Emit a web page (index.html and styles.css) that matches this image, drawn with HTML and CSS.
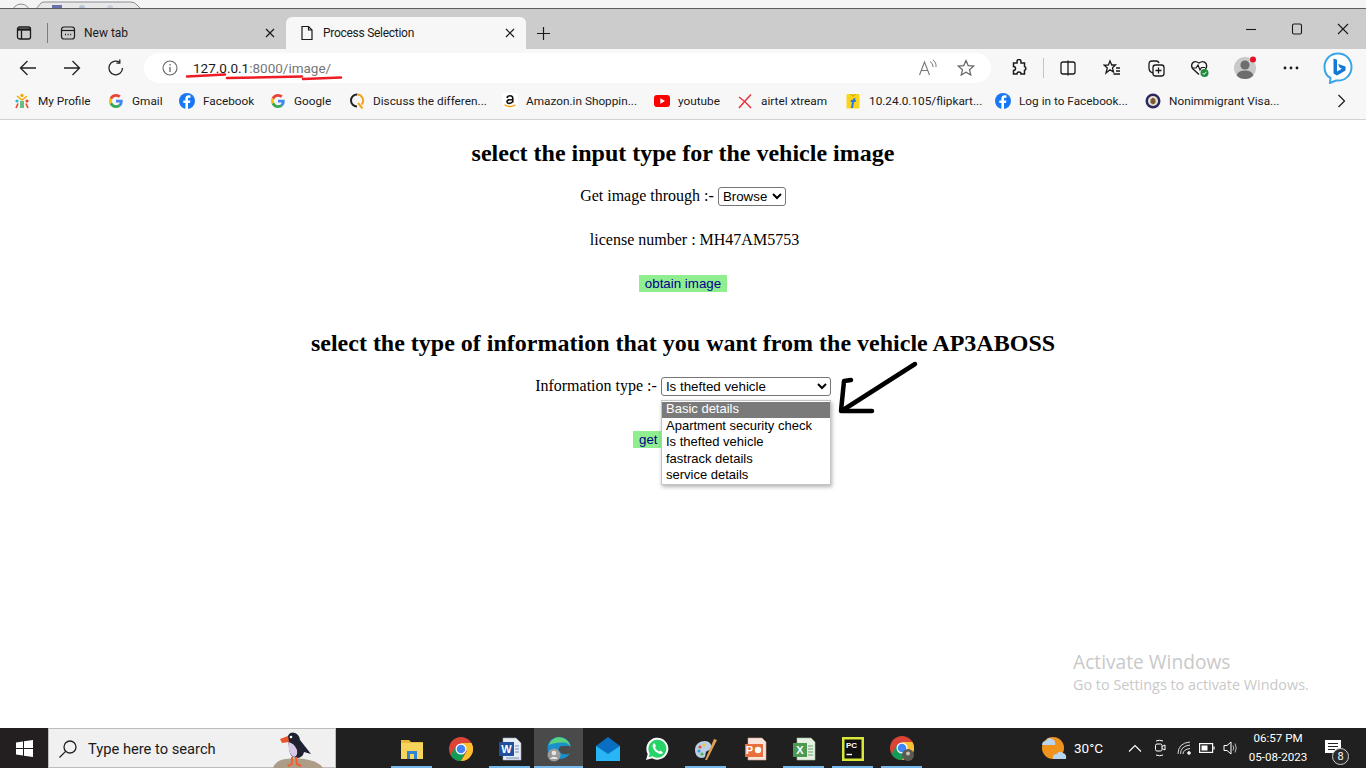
FILE: index.html
```html
<!DOCTYPE html>
<html lang="en">
<head>
<meta charset="utf-8">
<title>Process Selection</title>
<link rel="stylesheet" href="styles.css">
</head>
<body>
<div class="screen">
  <div class="desktop-strip">
    <svg class="strip-art" width="150" height="9" viewBox="0 0 150 9"><circle cx="21" cy="13" r="9" fill="#eee" stroke="#8a8f96"/><path d="M36 9 L41 3 Q42 2 45 2 H131 Q135 2 137 5 L141 9" fill="#e8e8e8" stroke="#8a8f96"/><rect x="52" y="5" width="10" height="4" fill="#6a6fb0"/><circle cx="82" cy="8" r="3" fill="#b9c3d6"/><circle cx="110" cy="8" r="3" fill="#c9ced8"/></svg>
  </div>
  <header class="browser">
    <div class="tabstrip">
      <span class="strip-icon"><svg width="16" height="16" viewBox="0 0 16 16" fill="none" stroke="#1a1a1a" stroke-width="1.3"><rect x="1.5" y="2" width="13" height="12" rx="2"/><path d="M1.5 4.5H14.5" stroke-width="2.4"/><path d="M5.5 5.5V14" /></svg></span>
      <span class="strip-sep"></span>
      <div class="tab">
        <svg width="16" height="16" viewBox="0 0 16 16" fill="none" stroke="#1a1a1a" stroke-width="1.2"><rect x="1.5" y="2" width="13" height="12" rx="2.5"/><path d="M1.5 5.5H14.5"/><path d="M5 9.5h1M7.6 9.5h1M10.2 9.5h1" stroke-width="1.5"/></svg>
        <span class="tab-title">New tab</span>
        <svg class="tab-close" width="10" height="10" viewBox="0 0 10 10" stroke="#1a1a1a" stroke-width="1.2"><path d="M1 1L9 9M9 1L1 9"/></svg>
      </div>
      <div class="tab tab-active">
        <svg width="16" height="16" viewBox="0 0 16 16" fill="none" stroke="#1a1a1a" stroke-width="1.2"><path d="M3 1.5H9.5L13 5V14.5H3Z"/><path d="M9.5 1.5V5H13"/></svg>
        <span class="tab-title">Process Selection</span>
        <svg class="tab-close" width="10" height="10" viewBox="0 0 10 10" stroke="#1a1a1a" stroke-width="1.2"><path d="M1 1L9 9M9 1L1 9"/></svg>
      </div>
      <span class="new-tab"><svg width="15" height="15" viewBox="0 0 15 15" stroke="#1a1a1a" stroke-width="1.2"><path d="M7.5 1V14M1 7.5H14"/></svg></span>
      <div class="win-controls">
        <svg width="12" height="12" viewBox="0 0 12 12" stroke="#1a1a1a" stroke-width="1.1"><path d="M1 6.5H11"/></svg>
        <svg width="12" height="12" viewBox="0 0 12 12" fill="none" stroke="#1a1a1a" stroke-width="1.1"><rect x="1.5" y="1" width="9" height="10" rx="1.5"/></svg>
        <svg width="12" height="12" viewBox="0 0 12 12" stroke="#1a1a1a" stroke-width="1.1"><path d="M1 1L11 11M11 1L1 11"/></svg>
      </div>
    </div>
    <div class="toolbar">
      <div class="nav-buttons">
        <svg width="18" height="18" viewBox="0 0 18 18" fill="none" stroke="#222" stroke-width="1.3"><path d="M17 9H1.500M8.500 2L1.500 9L8.500 16"/></svg>
        <svg width="18" height="18" viewBox="0 0 18 18" fill="none" stroke="#222" stroke-width="1.3"><path d="M1 9H16.500M9.500 2L16.500 9L9.500 16"/></svg>
        <svg width="18" height="18" viewBox="0 0 18 18" fill="none" stroke="#222" stroke-width="1.3"><path d="M15.500 9A6.800 6.800 0 1 1 12.600 3.400"/><path d="M12.800 0.600V4.200H9.400" /></svg>
      </div>
      <div class="omnibox">
        <svg class="info" width="16" height="16" viewBox="0 0 16 16" fill="none" stroke="#666" stroke-width="1.1"><circle cx="8" cy="8" r="7"/><path d="M8 7V12M8 4V5.400" stroke-width="1.300"/></svg>
        <span class="url"><span class="url-host">127.0.0.1</span>:8000/image/</span>
        <svg class="read-aloud" width="20" height="18" viewBox="0 0 20 18" fill="none" stroke="#777" stroke-width="1.100"><path d="M1.500 16L6.500 3L11.500 16M3.400 11.500H9.600"/><path d="M12 2.500Q15 4 15 8M14.800 1Q18.500 3 18 8" stroke-width="1"/></svg>
        <svg class="star" width="18" height="18" viewBox="0 0 18 18" fill="none" stroke="#666" stroke-width="1.200"><path d="M9 1.500L11.200 6.600L16.700 7.100L12.500 10.700L13.800 16.100L9 13.200L4.200 16.100L5.500 10.700L1.300 7.100L6.800 6.600Z"/></svg>
      </div>
      <div class="tool-icons">
        <span class="tool ext"><svg width="18" height="18" viewBox="0 0 18 18" fill="none" stroke="#1a1a1a" stroke-width="1.500"><path d="M7 2.500a2 2 0 0 1 4 0V4h3.500v3.500a2 2 0 0 1 0 3.800V15H11a2 2 0 0 0-4 0H3.500v-3.500a2 2 0 0 0 0-4V4H7Z"/></svg></span>
        <span class="tool-sep"></span>
        <span class="tool split"><svg width="18" height="18" viewBox="0 0 18 18" fill="none" stroke="#1a1a1a" stroke-width="1.300"><path d="M9 3H4Q2 3 2 5V13Q2 15 4 15H9M9 3H14Q16 3 16 5V13Q16 15 14 15H9M9 1.500V16.500"/></svg></span>
        <span class="tool fav"><svg width="18" height="18" viewBox="0 0 18 18" fill="none" stroke="#1a1a1a" stroke-width="1.300"><path d="M7 2L8.700 6H12.500L9.500 8.800L10.500 13L7 10.800L3 14L4.300 9L1.200 6.200H5.300Z"/><path d="M13 9H17M13 12H17M10.500 15H17"/></svg></span>
        <span class="tool coll"><svg width="18" height="18" viewBox="0 0 18 18" fill="none" stroke="#1a1a1a" stroke-width="1.300"><path d="M6 14Q2 13 2 9V5Q2 2 5 2H9Q11.500 2 12 4"/><rect x="6" y="6" width="11" height="11" rx="2.500"/><path d="M11.500 8.500V14.500M8.500 11.500H14.500"/></svg></span>
        <span class="tool health"><svg width="20" height="20" viewBox="0 0 20 20" fill="none"><path d="M9 16.500L3 11Q0.800 8.500 2.200 5.500Q4.500 2 9 5Q13.500 2 16 5.500Q17.500 8.500 15.500 11" stroke="#1a1a1a" stroke-width="1.400"/><path d="M2 10H6L8 7L10 12L11.500 9.500H15" stroke="#1a1a1a" stroke-width="1.200"/><circle cx="14.500" cy="15" r="4" fill="#1e8a3c"/><path d="M12.600 15L14 16.500L16.400 13.800" stroke="#fff" stroke-width="1"/></svg></span>
        <span class="tool avatar"><svg width="24" height="24" viewBox="0 0 24 24"><circle cx="12" cy="12" r="11" fill="#c9c9c9"/><circle cx="12" cy="9" r="4.600" fill="#6d6d6d"/><path d="M3.600 19.500Q5 14.500 12 14.500T20.400 19.500Q17 23 12 23T3.600 19.500Z" fill="#6d6d6d"/><circle cx="20" cy="3.500" r="3" fill="#e81123"/></svg></span>
        <span class="tool dots"><svg width="16" height="4" viewBox="0 0 16 4" fill="#1a1a1a"><circle cx="2" cy="2" r="1.400"/><circle cx="8" cy="2" r="1.400"/><circle cx="14" cy="2" r="1.400"/></svg></span>
        <span class="tool bing"><svg width="30" height="32" viewBox="0 0 30 32"><path d="M15 1.500C7 1.500 1.500 7.500 1.500 15C1.500 20 3.500 24 7.500 26L7 31L13 28.500C22 29.500 28.500 23 28.500 15C28.500 7.500 23 1.500 15 1.500Z" fill="#fff" stroke="#3aa5e8" stroke-width="2"/><path d="M10.500 6.500L14 7.800V19.500L19 16.700L16.500 15.500L15.200 12L22.500 14.600V18.600L14 23.600L10.500 21.500Z" fill="#1478d4"/></svg></span>
      </div>
    </div>
    <nav class="bookmarks">
      <a class="bm"><svg width="16" height="16" viewBox="0 0 16 16"><circle cx="8" cy="2.500" r="1.700" fill="#f2a900"/><path d="M3 3L8 7L13 3" stroke="#f2a900" stroke-width="1.400" fill="none"/><circle cx="3" cy="8" r="1.600" fill="#29b6d8"/><circle cx="13" cy="8" r="1.600" fill="#e8452c"/><path d="M2 15L4 10.500M14 15L12 10.500" stroke="#e8452c" stroke-width="1.600"/><path d="M7 8V15M9 8V15" stroke="#2fa84f" stroke-width="1.400"/></svg><span>My Profile</span></a>
      <a class="bm"><svg class="g" width="14" height="14" viewBox="0 0 48 48"><path fill="#EA4335" d="M24 9.500c3.500 0 6.700 1.200 9.200 3.600l6.900-6.900C35.900 2.400 30.400 0 24 0 14.600 0 6.500 5.400 2.600 13.200l8 6.200C12.500 13.700 17.800 9.500 24 9.500z"/><path fill="#4285F4" d="M47 24.500c0-1.600-.1-3.100-.4-4.500H24v9h12.900c-.6 3-2.200 5.500-4.700 7.200l7.700 6C44.400 37.900 47 31.800 47 24.500z"/><path fill="#FBBC05" d="M10.500 28.600c-.5-1.400-.8-3-.8-4.600s.3-3.200.8-4.600l-8-6.200C.9 16.500 0 20.100 0 24s.9 7.500 2.600 10.800l7.900-6.200z"/><path fill="#34A853" d="M24 48c6.500 0 11.900-2.100 15.900-5.800l-7.700-6c-2.200 1.400-4.900 2.300-8.200 2.300-6.200 0-11.500-4.200-13.400-9.900l-8 6.200C6.500 42.600 14.600 48 24 48z"/></svg><span>Gmail</span></a>
      <a class="bm"><svg width="16" height="16" viewBox="0 0 16 16"><circle cx="8" cy="8" r="8" fill="#1877f2"/><path d="M9 16V10h2l.4-2.500H9V6c0-.8.3-1.300 1.400-1.300h1.100V2.500C11 2.400 10.300 2.300 9.700 2.300 7.700 2.300 6.400 3.500 6.400 5.600v1.900H4.300V10h2.100v6Z" fill="#fff"/></svg><span>Facebook</span></a>
      <a class="bm"><svg class="g" width="14" height="14" viewBox="0 0 48 48"><path fill="#EA4335" d="M24 9.500c3.500 0 6.700 1.200 9.200 3.600l6.900-6.900C35.900 2.400 30.400 0 24 0 14.600 0 6.500 5.400 2.600 13.200l8 6.200C12.500 13.700 17.800 9.500 24 9.500z"/><path fill="#4285F4" d="M47 24.500c0-1.600-.1-3.100-.4-4.500H24v9h12.900c-.6 3-2.200 5.500-4.700 7.200l7.700 6C44.400 37.900 47 31.800 47 24.500z"/><path fill="#FBBC05" d="M10.500 28.600c-.5-1.400-.8-3-.8-4.600s.3-3.200.8-4.600l-8-6.200C.9 16.500 0 20.100 0 24s.9 7.500 2.600 10.800l7.900-6.200z"/><path fill="#34A853" d="M24 48c6.500 0 11.900-2.100 15.900-5.800l-7.700-6c-2.200 1.400-4.900 2.300-8.200 2.300-6.200 0-11.500-4.200-13.400-9.900l-8 6.200C6.500 42.600 14.600 48 24 48z"/></svg><span>Google</span></a>
      <a class="bm"><svg width="16" height="16" viewBox="0 0 16 16" fill="none"><path d="M8 1.500A6 6 0 1 0 8 13.500" stroke="#222" stroke-width="2"/><path d="M8 1.500A6 6 0 0 1 12.500 11.500" stroke="#f2a21f" stroke-width="2"/><path d="M9 10L13.500 15.500" stroke="#f2a21f" stroke-width="2"/></svg><span>Discuss the differen...</span></a>
      <a class="bm"><svg width="16" height="16" viewBox="0 0 16 16" fill="none"><rect width="16" height="16" rx="2" fill="#fff"/><path d="M5 5Q5.500 2.800 8 2.800T10.800 5V9.500M10.800 6.500Q5 6.500 5 8.600T8 10.300Q10 10 10.800 8.200" stroke="#111" stroke-width="1.600"/><path d="M2.500 11.800Q8 15.500 13.500 11.800" stroke="#f90" stroke-width="1.300"/></svg><span>Amazon.in Shoppin...</span></a>
      <a class="bm"><svg width="16" height="12" viewBox="0 0 16 12"><rect width="16" height="12" rx="3" fill="#f00"/><path d="M6.300 3.300V8.700L11 6Z" fill="#fff"/></svg><span>youtube</span></a>
      <a class="bm"><svg width="16" height="16" viewBox="0 0 16 16" fill="none" stroke="#e8303a" stroke-width="1.500"><path d="M2 15Q7 9 14 1.500"/><path d="M2 4Q8 8 14 15"/></svg><span>airtel xtream</span></a>
      <a class="bm"><svg width="16" height="16" viewBox="0 0 16 16"><rect x="1.500" y="1" width="13" height="14.500" rx="1" fill="#f9d51c"/><path d="M5.500 1Q8 5 10.500 1" fill="none" stroke="#c9a400"/><path d="M6 15L7 9H5.500L6 7H7.500Q8 4.800 10.500 5L10.200 6.800Q9.400 6.700 9.300 7H11L10.600 9H9L8 15Z" fill="#2874f0"/></svg><span>10.24.0.105/flipkart...</span></a>
      <a class="bm"><svg width="16" height="16" viewBox="0 0 16 16"><circle cx="8" cy="8" r="8" fill="#1877f2"/><path d="M9 16V10h2l.4-2.500H9V6c0-.8.3-1.300 1.400-1.300h1.100V2.500C11 2.400 10.300 2.300 9.700 2.300 7.700 2.300 6.400 3.500 6.400 5.600v1.900H4.300V10h2.100v6Z" fill="#fff"/></svg><span>Log in to Facebook...</span></a>
      <a class="bm"><svg width="16" height="16" viewBox="0 0 16 16"><circle cx="8" cy="8" r="7.500" fill="#2b2a5e"/><circle cx="8" cy="8" r="5" fill="#e9e4d4"/><path d="M8 4.500L10.500 6.500V10L8 11.500L5.500 10V6.500Z" fill="#7a5a34"/></svg><span>Nonimmigrant Visa...</span></a>
      <svg class="bm-more" width="9" height="14" viewBox="0 0 9 14" fill="none" stroke="#222" stroke-width="1.300"><path d="M1.500 1L7.500 7L1.500 13"/></svg>
    </nav>
  </header>

  <main class="page">
    <h2 class="heading">select the input type for the vehicle image</h2>
    <div class="row row-source">
      <label>Get image through :-</label>
      <select class="picker picker-source"><option>Browse</option><option>Camera</option></select>
    </div>
    <div class="row row-license">license number : MH47AM5753</div>
    <button class="action action-obtain" type="button">obtain image</button>
    <h2 class="heading heading-info">select the type of information that you want from the vehicle AP3ABOSS</h2>
    <div class="row row-source">
      <label>Information type :-</label>
      <select class="picker picker-info">
        <option hidden>Basic details</option>
        <option hidden>Apartment security check</option>
        <option selected>Is thefted vehicle</option>
        <option>fastrack details</option>
        <option>service details</option>
      </select>
    </div>
    <button class="action action-get" type="button">get</button>

    <ul class="dropdown">
      <li class="dropdown-active">Basic details</li>
      <li>Apartment security check</li>
      <li>Is thefted vehicle</li>
      <li>fastrack details</li>
      <li>service details</li>
    </ul>
    <div class="watermark">
      <div class="wm-title">Activate Windows</div>
      <div class="wm-sub">Go to Settings to activate Windows.</div>
    </div>
  </main>

  <footer class="taskbar">
    <div class="start"><svg width="17" height="17" viewBox="0 0 17 17" fill="#fff"><path d="M0 2.400L7 1.400V8H0ZM8 1.200L17 0V8H8ZM0 9H7V15.600L0 14.600ZM8 9H17V17L8 15.800Z"/></svg></div>
    <div class="search">
      <svg width="20" height="20" viewBox="0 0 20 20" fill="none" stroke="#222" stroke-width="1.300"><circle cx="12" cy="8" r="6"/><path d="M7.600 12.400L1.500 18.500"/></svg>
      <span class="search-text">Type here to search</span>
      <svg class="puffin" width="50" height="36" viewBox="0 0 50 36"><path d="M0 36Q3 28 13 27Q26 25 36 28Q46 30 50 36Z" fill="#ad9c88"/><path d="M15 7Q14 1 20 0.500Q26 1 27 8L38 22L31 20Q30 26 23 26Q16 25 16 15Z" fill="#1f2230"/><path d="M15.500 10Q21 11 24 18Q25 24 21 25Q15 23 15.500 10Z" fill="#d9c9e8"/><path d="M15 4L7 7L9 11L16 10Z" fill="#e8562c"/><circle cx="18" cy="5" r="1.300" fill="#fff"/><path d="M19 25L19 32L15 34M23 25L24 32L28 34" stroke="#f0602c" stroke-width="2" fill="none"/></svg>
    </div>
    <div class="task-icons">
      <span class="task task-open"><svg width="22" height="22" viewBox="0 0 22 22"><path d="M0 2H8L10 4H22V7H0Z" fill="#e8b93b"/><rect y="5" width="22" height="16" fill="#f7d55c"/><path d="M6 21V13H16V21H13V16H9V21Z" fill="#2f86d6"/></svg></span>
      <span class="task"><svg width="24" height="24" viewBox="0 0 24 24"><circle cx="12" cy="12" r="12" fill="#db4437"/><path d="M12 12L1.600 18A12 12 0 0 0 12 24L18 12Z" fill="#0f9d58"/><path d="M12 24A12 12 0 0 0 22.400 6H12L18 14Z" fill="#fbc02d"/><path d="M1.600 18L7 9L12 12Z" fill="#0f9d58"/><circle cx="12" cy="12" r="5.500" fill="#fff"/><circle cx="12" cy="12" r="4.300" fill="#4285f4"/></svg></span>
      <span class="task task-open"><svg width="24" height="24" viewBox="0 0 24 24"><path d="M5 1H18L23 6V23H5Z" fill="#e8edf4" stroke="#9aa8c0" stroke-width=".6"/><rect x="1" y="5" width="15" height="14" fill="#1f4f9e"/><text x="8.500" y="16" class="ic-letter">W</text><path d="M17 9H21M17 12H21M17 15H21M8 21H21" stroke="#6f8bb8"/></svg></span>
      <span class="task task-current"><svg width="24" height="28" viewBox="0 0 24 28"><path d="M12 2C5 2 0.500 7 0.500 13C0.500 20 6 24 12 24C17 24 21 22 23 18C20 20 14 20 12 16C11 13 13 11 16 11H23.500C23 6 18.500 2 12 2Z" fill="#1a8fc9"/><path d="M2 10C4 3 11 1 16 3C21 5 23.500 9 23.500 13C23 9 19 7 15 7.500C10 8 6 8 2 10Z" fill="#5bd27c"/><circle cx="7" cy="20" r="6.500" fill="#9a9a9a"/><circle cx="7" cy="18" r="2.300" fill="#e6e6e6"/><path d="M2.800 24Q7 19.500 11.200 24Z" fill="#e6e6e6"/></svg></span>
      <span class="task"><svg width="24" height="24" viewBox="0 0 24 24"><path d="M0 9L12 0L24 9V24H0Z" fill="#0a6fc2"/><path d="M0 9L12 17L24 9V24H0Z" fill="#29b6f6"/></svg></span>
      <span class="task"><svg width="24" height="24" viewBox="0 0 24 24"><path d="M1 23L2.700 17A11 11 0 1 1 7 21.300Z" fill="#fff"/><path d="M3.600 20.300L4.800 16.500A9 9 0 1 1 7.600 19.300Z" fill="#25d366"/><path d="M8.500 6.500Q7 8 7.800 10.500Q10 15.500 15 17Q17 17.500 18 15.500L15.500 13.500L14 14.500Q11 13 10 10.500L11 9L9.800 6.500Z" fill="#fff"/></svg></span>
      <span class="task task-open"><svg width="24" height="26" viewBox="0 0 24 26"><path d="M1 14C1 8 6 5 11 5C15 5 18 8 17 12C16 15 13 14 12 16C11 19 12 22 8 22C4 22 1 19 1 14Z" fill="#b9cfe6"/><circle cx="6" cy="11" r="1.600" fill="#e8503a"/><circle cx="10" cy="9" r="1.600" fill="#f0c33c"/><circle cx="5" cy="15" r="1.600" fill="#3f9be0"/><circle cx="8" cy="18" r="1.600" fill="#52b152"/><path d="M11 24L20 3L23 4L13 24Z" fill="#e0a052"/></svg></span>
      <span class="task"><svg width="24" height="24" viewBox="0 0 24 24"><path d="M5 1H19L23 5V23H5Z" fill="#f7e4dc" stroke="#d9a38e" stroke-width=".6"/><rect x="2" y="7" width="18" height="13" fill="#e8703c"/><text x="6.500" y="17" class="ic-letter">P</text><circle cx="15" cy="13" r="3.200" fill="#fff"/></svg></span>
      <span class="task task-open"><svg width="24" height="24" viewBox="0 0 24 24"><path d="M5 1H19L23 5V23H5Z" fill="#e6f1e4" stroke="#9fbf9a" stroke-width=".6"/><rect x="1" y="6" width="14" height="14" fill="#4c9a52"/><text x="8" y="17" class="ic-letter">X</text><path d="M16 9H21M16 12H21M16 15H21M16 18H21" stroke="#6a9f6a"/></svg></span>
      <span class="task task-open"><svg width="22" height="24" viewBox="0 0 22 24"><rect width="22" height="24" fill="#d8e83a"/><rect x="2.500" y="2.500" width="17" height="19" fill="#111"/><text x="4" y="11" class="ic-pc">PC</text><path d="M4.500 17.500H10" stroke="#fff" stroke-width="1.400"/></svg></span>
      <span class="task task-open"><svg width="24" height="26" viewBox="0 0 24 26"><circle cx="12" cy="12" r="12" fill="#db4437"/><path d="M12 12L1.600 18A12 12 0 0 0 12 24L18 12Z" fill="#0f9d58"/><path d="M12 24A12 12 0 0 0 22.400 6H12L18 14Z" fill="#fbc02d"/><path d="M1.600 18L7 9L12 12Z" fill="#0f9d58"/><circle cx="12" cy="12" r="5.500" fill="#fff"/><circle cx="12" cy="12" r="4.300" fill="#4285f4"/><circle cx="18" cy="19" r="6" fill="#5a5a52"/><circle cx="18" cy="17.500" r="2" fill="#c7c2b4"/></svg></span>
    </div>
    <div class="tray">
      <svg class="weather" width="26" height="28" viewBox="0 0 26 28"><path d="M12 3A11 11 0 1 1 12 25A11 11 0 0 1 12 3Z" fill="#f0931c"/><path d="M1 11Q1 7 5 7Q7 2 11 5Q15 6 14 11Z" fill="#b8d4ee"/><path d="M12 25Q11 20 16 20Q18 16 22 19Q26 20 25 25Z" fill="#b8d4ee"/></svg>
      <span class="temp">30°C</span>
      <svg class="tray-chev" width="14" height="8" viewBox="0 0 14 8" fill="none" stroke="#fff" stroke-width="1.100"><path d="M1 7.500L7 1.500L13 7.500"/></svg>
      <svg class="tray-cam" width="12" height="20" viewBox="0 0 12 20" fill="none" stroke="#fff" stroke-width="1"><rect x="1.500" y="6" width="6.500" height="7" rx="1.500"/><path d="M8 8.500L11 7V12L8 10.500M2 3Q5.500 1.500 9 3M2 17Q5.500 18.500 9 17"/></svg>
      <svg class="tray-wifi" width="14" height="14" viewBox="0 0 14 14" fill="none" stroke="#d8d8d8" stroke-width="1"><path d="M1 13Q1 2 13 1M3.500 13Q3.500 5 13 4M6 13Q6 8.500 13 7.500"/><circle cx="12" cy="12" r="1.400" fill="#fff"/></svg>
      <svg class="tray-bat" width="16" height="10" viewBox="0 0 16 10" fill="none" stroke="#fff" stroke-width="1.200"><rect x=".6" y=".6" width="13" height="8.800"/><rect x="2.500" y="2.500" width="6" height="5" fill="#fff" stroke="none"/><path d="M15 3.500V6.500"/></svg>
      <svg class="tray-vol" width="16" height="16" viewBox="0 0 16 16" fill="none" stroke="#fff" stroke-width="1"><path d="M1 5.500H4L8 2V14L4 10.500H1Z"/><path d="M10 5.500Q11.500 8 10 10.500M12 3.500Q14.500 8 12 12.500" stroke="#bbb"/></svg>
      <div class="clock"><span>06:57 PM</span><span>05-08-2023</span></div>
      <div class="notify">
        <svg width="16" height="13" viewBox="0 0 16 13"><path d="M0 0H16V13H0Z" fill="#fff"/><path d="M3 3.500H13M3 6.500H13M3 9.500H10" stroke="#222"/></svg>
        <span class="notify-badge">8</span>
      </div>
    </div>
  </footer>

  <svg class="annotations" width="1366" height="768" viewBox="0 0 1366 768" fill="none">
    <path d="M187 76.500L225 74.500" stroke="#ed1c24" stroke-width="2.500" stroke-linecap="round"/>
    <path d="M227 78L302 76.500" stroke="#ed1c24" stroke-width="2.500" stroke-linecap="round"/>
    <path d="M303 79L341 77.500" stroke="#ed1c24" stroke-width="2.500" stroke-linecap="round"/>
    <path d="M915 364L843 410" stroke="#000" stroke-width="4.500" stroke-linecap="round"/>
    <path d="M851 380L844 381L841 411H872" stroke="#000" stroke-width="4.500" stroke-linecap="round" stroke-linejoin="round"/>
  </svg>
</div>
</body>
</html>
```

FILE: styles.css
```css
* { box-sizing: border-box; }
html, body { margin: 0; padding: 0; }
body { background: #fff; overflow: hidden; }

.screen {
  position: relative;
  width: 1366px;
  height: 768px;
  display: flex;
  flex-direction: column;
  overflow: hidden;
  font-family: "Roboto", "Liberation Sans", sans-serif;
}

.desktop-strip {
  height: 9px;
  flex: none;
  background: #f4f4f4;
  border-bottom: 1px solid #5c5c5c;
  overflow: hidden;
}
.strip-art { display: block; }

.browser { flex: none; }

.tabstrip {
  height: 40px;
  background: #cccccc;
  display: flex;
  align-items: flex-end;
  color: #1a1a1a;
  font-size: 12px;
}
.strip-icon {
  width: 47px;
  height: 32px;
  display: flex;
  align-items: center;
  padding-left: 16px;
}
.strip-sep { width: 1px; height: 20px; background: #7d7d7d; margin-bottom: 6px; }
.tab {
  width: 238px;
  height: 32px;
  display: flex;
  align-items: center;
  padding-left: 12px;
  gap: 8px;
}
.tab-active {
  width: 240px;
  background: #f7f7f7;
  border-radius: 6px 6px 0 0;
  padding-left: 13px;
  gap: 8px;
}
.tab-active .tab-title { letter-spacing: -0.28px; }
.tab-title { flex: 1; white-space: nowrap; }
.tab-close { margin-right: 11px; }
.new-tab { width: 34px; height: 32px; display: flex; align-items: center; justify-content: center; }
.win-controls {
  margin-left: auto;
  height: 40px;
  width: 138px;
  display: flex;
  align-items: center;
  justify-content: space-between;
  padding: 0 17px;
}

.toolbar {
  height: 38px;
  background: #f7f7f7;
  display: flex;
  align-items: center;
}
.nav-buttons {
  width: 144px;
  display: flex;
  gap: 26px;
  padding-left: 19px;
}
.omnibox {
  width: 847px;
  height: 30px;
  background: #fff;
  border-radius: 15px;
  display: flex;
  align-items: center;
  padding-left: 18px;
}
.url {
  margin-left: 15px;
  font-size: 13.5px;
  color: #767676;
  white-space: nowrap;
  flex: 1;
}
.url-host { color: #1a1a1a; }
.read-aloud { margin-right: 19px; }
.star { margin-right: 16px; }
.tool-icons { flex: 1; display: flex; align-items: center; height: 38px; }
.tool { display: flex; align-items: center; justify-content: center; flex: none; }
.ext { width: 18px; margin-left: 19px; }
.tool-sep { width: 1px; height: 20px; background: #c4c4c4; margin-left: 15px; }
.split { width: 18px; margin-left: 15px; }
.fav { width: 18px; margin-left: 26px; }
.coll { width: 18px; margin-left: 26px; }
.health { width: 20px; margin-left: 25px; }
.avatar { width: 24px; margin-left: 23px; }
.dots { width: 16px; margin-left: 26px; }
.bing { width: 30px; margin-left: 24px; }

.bookmarks {
  height: 33px;
  background: #f7f7f7;
  border-bottom: 1px solid #d2d2d2;
  display: grid;
  grid-template-columns: 94px 71px 91px 79px 153px 152px 83px 108px 150px 150px 192px auto;
  align-items: center;
  padding: 0 0 4px 14px;
  font-size: 11.8px;
  color: #1a1a1a;
}
.bm {
  display: flex;
  align-items: center;
  gap: 8px;
  white-space: nowrap;
  overflow: hidden;
}
.bm .g { margin-left: 1px; margin-right: 1px; }

.page {
  flex: 1;
  min-height: 0;
  position: relative;
  display: flex;
  flex-direction: column;
  align-items: center;
  font-family: "Liberation Serif", serif;
  font-size: 16px;
  color: #000;
  background: #fff;
}
.heading {
  margin: 20px 0 0;
  font-size: 24px;
  font-weight: 700;
  line-height: 27px;
  white-space: nowrap;
}
.heading-info { margin-top: 38px; }
.row {
  display: flex;
  align-items: center;
  gap: 4px;
  height: 20px;
  white-space: pre;
}
.row-source { margin-top: 19px; }
.row-license { margin-top: 24px; margin-left: 23px; }
.picker {
  font-family: "Liberation Sans", sans-serif;
  font-size: 13.333px;
  height: 19px;
  padding: 0;
  background: #fff;
  color: #000;
  border: 1px solid #767676;
  border-radius: 3px;
}
.picker-source { width: 68px; }
.picker-info { width: 170px; }
.action {
  display: block;
  border: 0;
  padding: 0 6px;
  height: 17px;
  background: #90ee90;
  color: #00008b;
  font-family: "Liberation Sans", sans-serif;
  font-size: 13.333px;
  line-height: 17px;
  text-align: left;
}
.action-obtain { margin-top: 25px; }
.action-get { margin-top: 35px; width: 100px; }

.dropdown {
  position: absolute;
  left: 661px;
  top: 280px;
  width: 170px;
  height: 85px;
  margin: 0;
  padding: 1px 0;
  list-style: none;
  background: #fff;
  border: 1px solid #c4c4c4;
  box-shadow: 1px 2px 4px rgba(0, 0, 0, 0.3);
  font-family: "Liberation Sans", sans-serif;
  font-size: 13px;
  color: #000;
}
.dropdown li { height: 16.4px; line-height: 13px; padding-left: 4px; white-space: nowrap; }
.dropdown .dropdown-active { background: #7a7a7a; color: #fff; height: 16px; margin-bottom: 1px; }

.watermark {
  position: absolute;
  left: 1073px;
  top: 530px;
  color: #c9c9c9;
  white-space: nowrap;
}
.wm-title { font-family: "Open Sans", sans-serif; font-size: 19.2px; line-height: 24px; }
.wm-sub { font-family: "Open Sans", sans-serif; font-size: 14.4px; line-height: 22px; }

.taskbar {
  flex: none;
  height: 40px;
  background: #202020;
  display: flex;
  align-items: stretch;
  color: #fff;
}
.start {
  width: 48px;
  background: #231f20;
  display: flex;
  align-items: center;
  justify-content: center;
}
.search {
  width: 288px;
  position: relative;
  background: #f0f0f0;
  border: 1px solid #bdbdbd;
  display: flex;
  align-items: center;
  padding: 1px 0 0 9px;
  gap: 10px;
  color: #1a1a1a;
  font-size: 14.7px;
}
.puffin { position: absolute; left: 224px; bottom: -1px; }
.task-icons { display: flex; padding-left: 51px; width: 692px; flex: none; }
.task {
  width: 49px;
  display: flex;
  align-items: center;
  justify-content: center;
  padding-top: 1px;
}
.task-open { background: linear-gradient(#76b9ed, #76b9ed) center bottom / 41px 2px no-repeat; }
.task-current {
  background: linear-gradient(#76b9ed, #76b9ed) center bottom / 100% 2px no-repeat, #4a4a4a;
}
.ic-letter { font-family: "Liberation Sans", sans-serif; font-size: 11px; font-weight: 700; fill: #fff; text-anchor: middle; }
.ic-pc { font-family: "Liberation Sans", sans-serif; font-size: 8px; font-weight: 700; fill: #fff; }

.tray { flex: 1; display: flex; align-items: center; font-size: 13.5px; }
.weather { margin-left: 13px; }
.temp { margin-left: 7px; width: 32px; }
.tray-chev { margin-left: 22px; }
.tray-cam { margin-left: 12px; }
.tray-wifi { margin-left: 11px; }
.tray-bat { margin-left: 8px; }
.tray-vol { margin-left: 8px; }
.clock {
  margin-left: 8px;
  width: 62px;
  display: flex;
  flex-direction: column;
  align-items: center;
  font-size: 11.6px;
  line-height: 19px;
  white-space: nowrap;
}
.notify { position: relative; margin-left: 16px; width: 24px; height: 24px; padding-top: 4px; }
.notify svg { display: block; }
.notify-badge {
  position: absolute;
  left: 7px;
  top: 12px;
  width: 17px;
  height: 17px;
  border: 1px solid #cfcfcf;
  border-radius: 50%;
  background: #2b2b2b;
  font-size: 11px;
  line-height: 15px;
  text-align: center;
}

.annotations { position: absolute; left: 0; top: 0; pointer-events: none; }
```
